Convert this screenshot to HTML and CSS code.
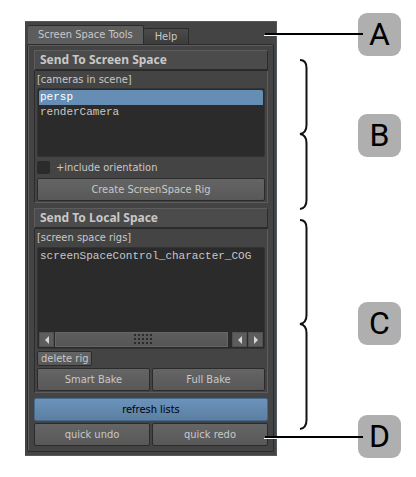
FILE: index.html
```html
<!DOCTYPE html>
<html lang="en">
<head>
<meta charset="utf-8">
<title>Screen Space Tools</title>
<link rel="stylesheet" href="styles.css">
</head>
<body>
<main class="figure">
  <div class="window">
    <div class="tabs" role="tablist">
      <button class="tab tab-active" role="tab" aria-selected="true">Screen Space Tools</button>
      <button class="tab" role="tab" aria-selected="false">Help</button>
    </div>
    <div class="pane">
      <section class="group">
        <h2 class="group-title">Send To Screen Space</h2>
        <div class="group-body">
          <label class="caption" for="cameras">[cameras in scene]</label>
          <div class="list-frame">
            <select class="list" id="cameras" size="4">
              <option selected>persp</option>
              <option>renderCamera</option>
            </select>
          </div>
          <label class="check"><input type="checkbox">+include orientation</label>
          <button class="btn">Create ScreenSpace Rig</button>
        </div>
      </section>
      <section class="group">
        <h2 class="group-title">Send To Local Space</h2>
        <div class="group-body group-body-rigs">
          <label class="caption" for="rigs">[screen space rigs]</label>
          <div class="list-frame">
            <select class="list list-tall" id="rigs" size="5">
              <option>screenSpaceControl_character_COG</option>
            </select>
            <div class="scroll">
              <button class="arrow" aria-label="Scroll to start"><svg width="6" height="8"><path d="M5 0V8L1 4Z"/></svg></button>
              <div class="thumb"><span class="grip"></span></div>
              <button class="arrow" aria-label="Scroll left"><svg width="6" height="8"><path d="M5 0V8L1 4Z"/></svg></button>
              <button class="arrow" aria-label="Scroll right"><svg width="6" height="8"><path d="M1 0V8L5 4Z"/></svg></button>
            </div>
          </div>
          <button class="btn btn-small">delete rig</button>
          <div class="row">
            <button class="btn">Smart Bake</button>
            <button class="btn">Full Bake</button>
          </div>
        </div>
      </section>
      <div class="actions">
        <button class="btn btn-primary">refresh lists</button>
        <div class="row">
          <button class="btn">quick undo</button>
          <button class="btn">quick redo</button>
        </div>
      </div>
    </div>
  </div>
  <aside class="callouts">
    <svg class="leaders" width="110" height="477" viewBox="0 0 110 477" aria-hidden="true">
      <path class="halo" d="M0 35.5H14M0 438.5H14"/>
      <path class="line" d="M1 34H99M1 437H99"/>
      <path class="brace" d="M36 60Q42.500 60 42.500 68V125Q42.500 133 36 134Q42.500 135 42.500 143V200Q42.500 208 36 209"/>
      <path class="brace" d="M36 220Q42.500 220 42.500 228V315Q42.500 323 36 324Q42.500 325 42.500 333V420Q42.500 428 36 429"/>
    </svg>
    <span class="badge badge-a">A</span>
    <span class="badge badge-b">B</span>
    <span class="badge badge-c">C</span>
    <span class="badge badge-d">D</span>
  </aside>
</main>
</body>
</html>
```
FILE: styles.css
```css
* { box-sizing: border-box; }
body {
  margin: 0;
  background: #fff;
  color: #c8c8c8;
  font: 11px/16px "DejaVu Sans Condensed", "Noto Sans", sans-serif;
}
button, select, input { font: inherit; color: inherit; margin: 0; }
.figure { display: flex; align-items: flex-start; }
.window {
  flex: 1;
  min-width: 0;
  margin: 21px 0 0 25px;
  padding: 3px 2px;
  background: #444;
  border: 1px solid #505a60;
  border-width: 1px 1px 1px 0;
}
.tabs { display: flex; align-items: flex-end; padding-left: 1px; }
.tab {
  height: 16px;
  padding: 0 11px;
  background: linear-gradient(#4b4b4b, #3c3c3c);
  border: 1px solid #2b2b2b;
  border-width: 1px 1px 0 0;
  border-radius: 2px 2px 0 0;
  line-height: 14px;
}
.tab-active {
  height: 19px;
  padding: 0 10px;
  background: #5d5d5d;
  line-height: 18px;
}
.pane {
  padding: 5px 5px 5px 6px;
  border: 1px solid #2b2b2b;
  border-radius: 2px;
  box-shadow: inset 1px 1px #5d5d5d;
}
.group {
  margin-bottom: 5px;
  border: 1px solid #5d5d5d;
  border-left-color: #2b2b2b;
}
.group-title {
  margin: -1px -1px 0;
  height: 21px;
  padding-left: 5px;
  background: #4b4b4b;
  border: 1px solid #5d5d5d;
  border-right-color: #2b2b2b;
  border-bottom: 2px solid #2b2b2b;
  font: bold 12px/18px "Noto Sans", sans-serif;
}
.group-body {
  display: flex;
  flex-direction: column;
  gap: 4px;
  padding: 1px 2px;
}
.group-body-rigs { gap: 2px; }
.caption { height: 15px; margin-bottom: -3px; line-height: 16px; }
.group-body-rigs .caption { margin-bottom: 0; }
.list-frame {
  padding: 1px;
  background: #2b2b2b;
  border: 1px solid #333;
  border-radius: 2px;
  overflow: hidden;
}
.list {
  display: block;
  width: 100%;
  height: 65px;
  padding: 0;
  background: #2b2b2b;
  border: 0;
  outline: 0;
  overflow: hidden;
  font: 11px/16px "Liberation Mono", monospace;
}
.list-tall { height: 83px; }
.list option { min-height: 15px; height: 15px; padding: 1px 0 0 1px; }
.list option:checked {
  background: linear-gradient(#668db3, #668db3);
  -webkit-text-fill-color: #fff;
}
.check { display: flex; align-items: center; gap: 6px; height: 13px; }
.check input {
  appearance: none;
  width: 13px;
  height: 13px;
  background: #2b2b2b;
  border-radius: 2px;
}
.btn {
  flex: 1 0 auto;
  height: 23px;
  padding: 0 4px;
  background: linear-gradient(#656565, #585858);
  border: 1px solid #2b2b2b;
  border-radius: 2px;
  line-height: 20px;
}
.btn-small {
  align-self: flex-start;
  height: 15px;
  padding: 0 3px;
  line-height: 13px;
  overflow: hidden;
}
.btn-primary {
  background: linear-gradient(#6b93bb, #5c7fa2);
  border-color: #456a8e;
  color: #000;
}
.row { display: flex; gap: 2px; }
.row .btn { flex: 1 1 0; }
.actions { display: flex; flex-direction: column; gap: 2px; }
.scroll { display: flex; height: 15px; background: #2b2b2b; gap: 1px; }
.arrow {
  display: grid;
  place-items: center;
  width: 15px;
  padding: 0;
  background: #5d5d5d;
  border: 1px solid #505050;
}
.arrow path { fill: #d8d8d8; }
.thumb {
  flex: 1;
  display: grid;
  place-items: center;
  margin-right: 3px;
  background: linear-gradient(#5d5d5d, #555);
  border: 1px solid #656565;
}
.grip {
  width: 20px;
  height: 12px;
  background: conic-gradient(#2b2b2b 25%, transparent 0) 0 0 / 4px 4px;
}
.callouts { position: relative; flex: none; width: 139px; padding: 13px 0 0 81px; }
.leaders { position: absolute; left: -13px; top: 0; fill: none; }
.line { stroke: #000; stroke-width: 2; }
.halo { stroke: #fff; stroke-width: 1; }
.brace { stroke: #111; stroke-width: 2; }
.badge {
  display: block;
  width: 43px;
  height: 43px;
  background: #afafaf;
  border-radius: 9px;
  color: #000;
  font: 32px/43px Roboto, sans-serif;
  text-align: center;
}
.badge-b { margin-top: 58px; }
.badge-c { margin-top: 145px; }
.badge-d { margin-top: 70px; }
```
